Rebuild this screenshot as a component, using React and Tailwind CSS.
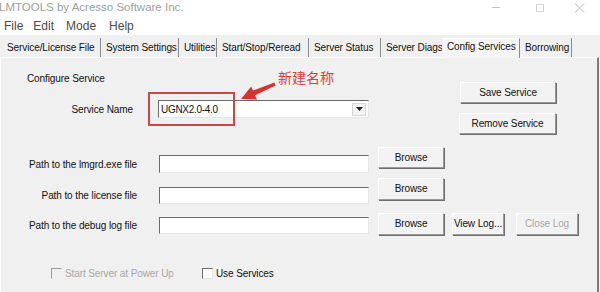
import React from "react";

const tabs = [
  { label: "Service/License File", w: "w-[99px]" },
  { label: "System Settings", w: "w-[78px]" },
  { label: "Utilities", w: "w-[38px]" },
  { label: "Start/Stop/Reread", w: "w-[92px]" },
  { label: "Server Status", w: "w-[72px]" },
  { label: "Server Diags", w: "w-[61px]", noSep: true },
  { label: "Config Services", w: "w-[78px]", active: true },
  { label: "Borrowing", w: "w-[52px]" },
];

const Btn = ({ children, className = "", disabled }) => (
  <div
    className={`flex items-center justify-center border border-t-white border-l-white border-r-[#9a9a9a] border-b-[#9a9a9a] bg-[#f3f3f3] shadow-[1px_1px_0_#6e6e6e] leading-none ${
      disabled ? "text-[#a8a8a8]" : "text-[#111]"
    } ${className}`}
  >
    {children}
  </div>
);

const Field = ({ className = "", children }) => (
  <div
    className={`bg-white border border-t-[#6a6a6a] border-l-[#6a6a6a] border-r-[#e6e6e6] border-b-[#e6e6e6] ${className}`}
  >
    {children}
  </div>
);

const Check = ({ label, disabled, className = "" }) => (
  <div className={`flex items-center ${className}`}>
    <div
      className={`w-[11px] h-[11px] border ${
        disabled
          ? "border-t-[#9a9a9a] border-l-[#9a9a9a] border-r-[#f0f0f0] border-b-[#f0f0f0] bg-[#f0f0f0]"
          : "border-t-[#6a6a6a] border-l-[#6a6a6a] border-r-[#e6e6e6] border-b-[#e6e6e6] bg-white"
      }`}
    />
    <span className={`ml-[3px] ${disabled ? "text-[#a8a8a8]" : "text-[#111]"}`}>{label}</span>
  </div>
);

export default function App() {
  return (
    <div className="relative w-[600px] h-[292px] overflow-hidden bg-[#f0f0f0] font-['Liberation_Sans',Arial,sans-serif] text-[10px] tracking-[-0.1px] text-[#111]">
      {/* title bar */}
      <div className="h-[16px] bg-white flex items-center justify-between">
        <span className="-ml-[1px] text-[11.5px] tracking-normal text-[#a0a0a0] leading-none">
          LMTOOLS by Acresso Software Inc.
        </span>
        <div className="flex items-center h-full">
          <div className="w-[8px] h-px bg-[#c4c4c4] mr-[36px] mt-[-2px]" />
          <div className="w-[8px] h-[8px] border border-[#d4d4d4] mr-[30px]" />
          <svg width="11" height="10" viewBox="0 0 11 10" className="mr-[15px]">
            <path d="M1 0.5 L10 9.5 M10 0.5 L1 9.5" stroke="#b8b8b8" strokeWidth="1" />
          </svg>
        </div>
      </div>

      {/* menu */}
      <div className="h-[19px] bg-white flex items-center text-[12px] tracking-normal text-[#4a4a4a] pl-[4px] leading-none">
        <span>File</span>
        <span className="ml-[10px]">Edit</span>
        <span className="ml-[12px]">Mode</span>
        <span className="ml-[13px]">Help</span>
      </div>

      {/* tabs */}
      <div className="h-[22px] flex items-end pl-[2px]">
        {tabs.map((t) => (
          <div
            key={t.label}
            className={`${t.w} flex items-center pl-[5px] whitespace-nowrap ${
              t.noSep ? "" : "border-r border-r-[#8a8a8a]"
            } ${t.active ? "h-[20px] bg-[#f5f5f5] border-t border-t-white mb-[-1px] pb-[4px]" : "h-[19px]"}`}
          >
            {t.label}
          </div>
        ))}
      </div>

      {/* panel */}
      <div className="h-[235px] w-[599px] border-l border-l-white border-r-2 border-r-[#7c7c7c] border-t border-t-white flex flex-col">
        {/* top section */}
        <div className="flex h-[89px]">
          <div className="w-[458px] flex flex-col">
            <div className="mt-[15px] pl-[26px] leading-[12px]">Configure Service</div>
            <div className="mt-[15px] flex items-center h-[18px]">
              <div className="w-[132px] text-right">Service Name</div>
              <Field className="ml-[25px] w-[211px] h-[18px] flex items-center justify-between">
                <span className="pl-[2px] tracking-[-0.3px]">UGNX2.0-4.0</span>
                <div className="mr-[2px] w-[14px] h-[13px] border border-[#d8d8d8] bg-[#f3f3f3] flex items-center justify-center">
                  <svg width="7" height="4" viewBox="0 0 7 4">
                    <path d="M0 0 H7 L3.5 4 Z" fill="#222" />
                  </svg>
                </div>
              </Field>
            </div>
          </div>
          <div className="flex flex-col pt-[24px]">
            <Btn className="w-[96px] h-[21px] ml-[1px]">Save Service</Btn>
            <Btn className="w-[97px] h-[21px] mt-[10px]">Remove Service</Btn>
          </div>
        </div>

        {/* path rows */}
        <div className="flex h-[31px] items-start">
          <div className="flex items-center mt-[8px]">
            <div className="w-[136px] text-right">Path to the lmgrd.exe file</div>
            <Field className="ml-[22px] w-[210px] h-[18px]" />
          </div>
          <Btn className="ml-[9px] w-[66px] h-[21px]">Browse</Btn>
        </div>
        <div className="flex h-[35px] items-start">
          <div className="flex items-center mt-[9px]">
            <div className="w-[136px] text-right">Path to the license file</div>
            <Field className="ml-[22px] w-[210px] h-[17px]" />
          </div>
          <Btn className="ml-[9px] w-[66px] h-[22px]">Browse</Btn>
        </div>
        <div className="flex h-[23px] items-start">
          <div className="flex items-center mt-[4px]">
            <div className="w-[136px] text-right">Path to the debug log file</div>
            <Field className="ml-[22px] w-[210px] h-[17px]" />
          </div>
          <Btn className="ml-[9px] w-[66px] h-[22px]">Browse</Btn>
          <Btn className="ml-[8px] w-[52px] h-[22px]">View Log...</Btn>
          <Btn className="ml-[12px] w-[62px] h-[22px]" disabled>
            Close Log
          </Btn>
        </div>

        {/* checkboxes */}
        <div className="mt-[31px] h-[13px] flex items-center pl-[50px]">
          <Check label="Start Server at Power Up" disabled className="w-[151px]" />
          <Check label="Use Services" />
        </div>
      </div>

      {/* annotation overlay */}
      <div className="absolute left-[148px] top-[92px] w-[87px] h-[34px] border-2 border-[#c9474a]" />
      <svg className="absolute left-0 top-0" width="600" height="292" viewBox="0 0 600 292">
        <polygon
          points="241,99 251.2,86.6 253,90.6 274.4,82.4 275.6,85.6 255,95.2 257,99.6"
          fill="#d6322f"
        />
      </svg>
      <div className="absolute left-[278px] top-[69px] text-[14px] leading-[16px] tracking-normal text-[#d9413a] font-['Noto_Sans_CJK_SC',sans-serif]">
        新建名称
      </div>
    </div>
  );
}
